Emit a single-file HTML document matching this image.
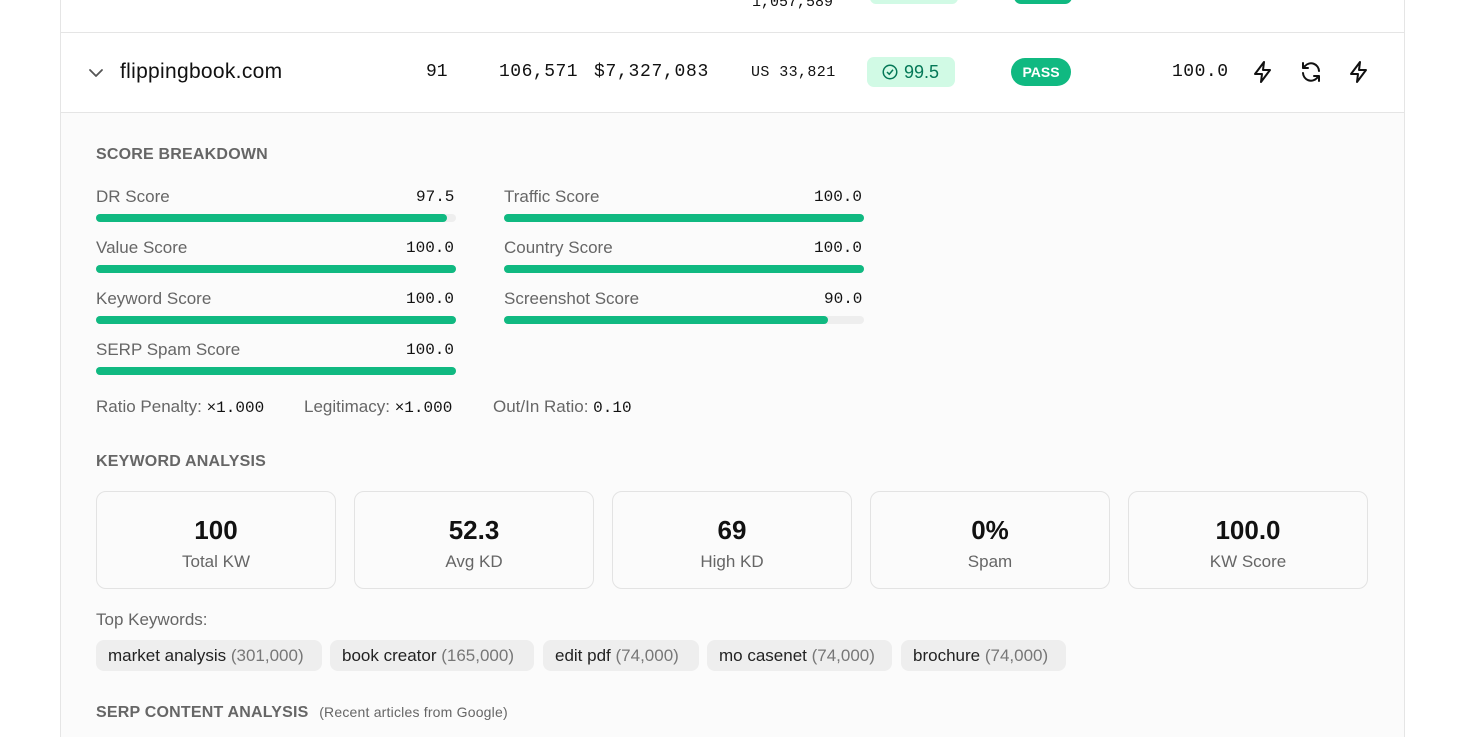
<!DOCTYPE html>
<html style="overflow:hidden;height:737px"><head><style>
*{box-sizing:border-box;margin:0;padding:0}
body{width:1475px;height:737px;overflow:hidden;background:#fff;font-family:"Liberation Sans",sans-serif;position:relative;color:#111}
.a{position:absolute;white-space:nowrap}
.m{font-family:"Liberation Mono",monospace}
.box{position:absolute;left:60px;top:-2px;width:1345px;height:739px;border:1px solid #e5e5e5;border-bottom:none;background:#fff}
.exp{position:absolute;left:61px;top:112px;width:1343px;height:625px;background:#fbfbfb;border-top:1px solid #e5e5e5}
.h{font-size:16px;color:#666;font-weight:bold;letter-spacing:.2px}
.lbl{font-size:17px;color:#666}
.val{font-size:16px;color:#111}
.tr{position:absolute;height:8px;width:360px;background:#eee;border-radius:4px}
.fi{height:8px;background:#10b981;border-radius:4px}
.card{position:absolute;top:491px;width:240px;height:98px;border:1px solid #e3e3e3;border-radius:10px;background:#fbfbfb;text-align:center}
.card b{display:block;font-size:26px;margin-top:23px;color:#111}
.card span{display:block;font-size:17px;color:#666;margin-top:6px}
.tag{position:absolute;top:640px;height:31px;line-height:31px;padding:0 12px;background:#eeeeee;border-radius:8px;font-size:17px;color:#222}
.tag i{font-style:normal;color:#777}
</style></head><body>
<div class="box"></div>
<div class="a" style="left:60px;top:32px;width:1345px;border-top:1px solid #e5e5e5"></div>
<div class="a m" style="left:752px;top:-6px;font-size:15px">1,057,589</div>
<div class="a" style="left:870px;top:-10px;width:88px;height:14px;background:#d1fae5;border-radius:6px"></div>
<div class="a" style="left:1014px;top:-10px;width:58px;height:14px;background:#10b981;border-radius:7px"></div>

<svg class="a" style="left:86px;top:63px" width="20" height="20" viewBox="0 0 20 20"><path d="M4 7l6 6 6-6" fill="none" stroke="#555" stroke-width="1.8" stroke-linecap="round" stroke-linejoin="round"/></svg>
<div class="a" style="left:120px;top:60px;font-size:21px;color:#111;letter-spacing:.3px">flippingbook.com</div>
<div class="a m" style="left:426px;top:62px;font-size:18px">91</div>
<div class="a m" style="left:499px;top:62px;font-size:18px;letter-spacing:.5px">106,571</div>
<div class="a m" style="left:594px;top:62px;font-size:18px;letter-spacing:.7px">$7,327,083</div>
<div class="a m" style="left:751px;top:64px;font-size:15px;letter-spacing:.4px">US 33,821</div>
<div class="a" style="left:867px;top:57px;width:88px;height:30px;background:#d1fae5;border-radius:7px;color:#047857;font-size:18px;line-height:30px;padding-left:14px">
<svg style="vertical-align:-3px" width="18" height="18" viewBox="0 0 24 24"><circle cx="12" cy="12" r="9" fill="none" stroke="#047857" stroke-width="2"/><path d="M8 12l3 3 5-6" fill="none" stroke="#047857" stroke-width="2"/></svg> 99.5</div>
<div class="a" style="left:1011px;top:58px;width:60px;height:28px;background:#10b981;border-radius:14px;color:#fff;font-size:14px;font-weight:bold;line-height:28px;text-align:center">PASS</div>
<div class="a m" style="left:1172px;top:62px;font-size:18px;letter-spacing:.5px">100.0</div>
<svg class="a" style="left:1251px;top:60px" width="24" height="24" viewBox="0 0 24 24"><path d="M13 2L4 14h7l-1 8 9-12h-7z" fill="none" stroke="#111" stroke-width="2" stroke-linejoin="round"/></svg>
<svg class="a" style="left:1299px;top:60px" width="24" height="24" viewBox="0 0 24 24"><path d="M20 11a8 8 0 0 0-14-5l-2 2M4 3v5h5M4 13a8 8 0 0 0 14 5l2-2M20 21v-5h-5" fill="none" stroke="#111" stroke-width="2" stroke-linecap="round" stroke-linejoin="round"/></svg>
<svg class="a" style="left:1347px;top:60px" width="24" height="24" viewBox="0 0 24 24"><path d="M13 2L4 14h7l-1 8 9-12h-7z" fill="none" stroke="#111" stroke-width="2" stroke-linejoin="round"/></svg>

<div class="exp"></div>
<div class="a h" style="left:96px;top:146px">SCORE BREAKDOWN</div>

<div class="a lbl" style="left:96px;top:187px">DR Score</div><div class="a m val" style="left:416px;top:188px">97.5</div>
<div class="tr" style="left:96px;top:214px"><div class="fi" style="width:351px"></div></div>
<div class="a lbl" style="left:504px;top:187px">Traffic Score</div><div class="a m val" style="left:814px;top:188px">100.0</div>
<div class="tr" style="left:504px;top:214px"><div class="fi" style="width:360px"></div></div>

<div class="a lbl" style="left:96px;top:238px">Value Score</div><div class="a m val" style="left:406px;top:239px">100.0</div>
<div class="tr" style="left:96px;top:265px"><div class="fi" style="width:360px"></div></div>
<div class="a lbl" style="left:504px;top:238px">Country Score</div><div class="a m val" style="left:814px;top:239px">100.0</div>
<div class="tr" style="left:504px;top:265px"><div class="fi" style="width:360px"></div></div>

<div class="a lbl" style="left:96px;top:289px">Keyword Score</div><div class="a m val" style="left:406px;top:290px">100.0</div>
<div class="tr" style="left:96px;top:316px"><div class="fi" style="width:360px"></div></div>
<div class="a lbl" style="left:504px;top:289px">Screenshot Score</div><div class="a m val" style="left:824px;top:290px">90.0</div>
<div class="tr" style="left:504px;top:316px"><div class="fi" style="width:324px"></div></div>

<div class="a lbl" style="left:96px;top:340px">SERP Spam Score</div><div class="a m val" style="left:406px;top:341px">100.0</div>
<div class="tr" style="left:96px;top:367px"><div class="fi" style="width:360px"></div></div>

<div class="a lbl" style="left:96px;top:397px">Ratio Penalty: <span class="m" style="color:#111;font-size:16px">×1.000</span></div>
<div class="a lbl" style="left:304px;top:397px">Legitimacy: <span class="m" style="color:#111;font-size:16px">×1.000</span></div>
<div class="a lbl" style="left:493px;top:397px">Out/In Ratio: <span class="m" style="color:#111;font-size:16px">0.10</span></div>

<div class="a h" style="left:96px;top:453px">KEYWORD ANALYSIS</div>
<div class="card" style="left:96px"><b>100</b><span>Total KW</span></div>
<div class="card" style="left:354px"><b>52.3</b><span>Avg KD</span></div>
<div class="card" style="left:612px"><b>69</b><span>High KD</span></div>
<div class="card" style="left:870px"><b>0%</b><span>Spam</span></div>
<div class="card" style="left:1128px"><b>100.0</b><span>KW Score</span></div>

<div class="a lbl" style="left:96px;top:610px">Top Keywords:</div>
<div class="tag" style="left:96px;width:226px">market analysis <i>(301,000)</i></div>
<div class="tag" style="left:330px;width:204px">book creator <i>(165,000)</i></div>
<div class="tag" style="left:543px;width:156px">edit pdf <i>(74,000)</i></div>
<div class="tag" style="left:707px;width:185px">mo casenet <i>(74,000)</i></div>
<div class="tag" style="left:901px;width:165px">brochure <i>(74,000)</i></div>

<div class="a h" style="left:96px;top:704px">SERP CONTENT ANALYSIS <span style="font-weight:normal;font-size:14px;color:#666;margin-left:6px">(Recent articles from Google)</span></div>
</body></html>
